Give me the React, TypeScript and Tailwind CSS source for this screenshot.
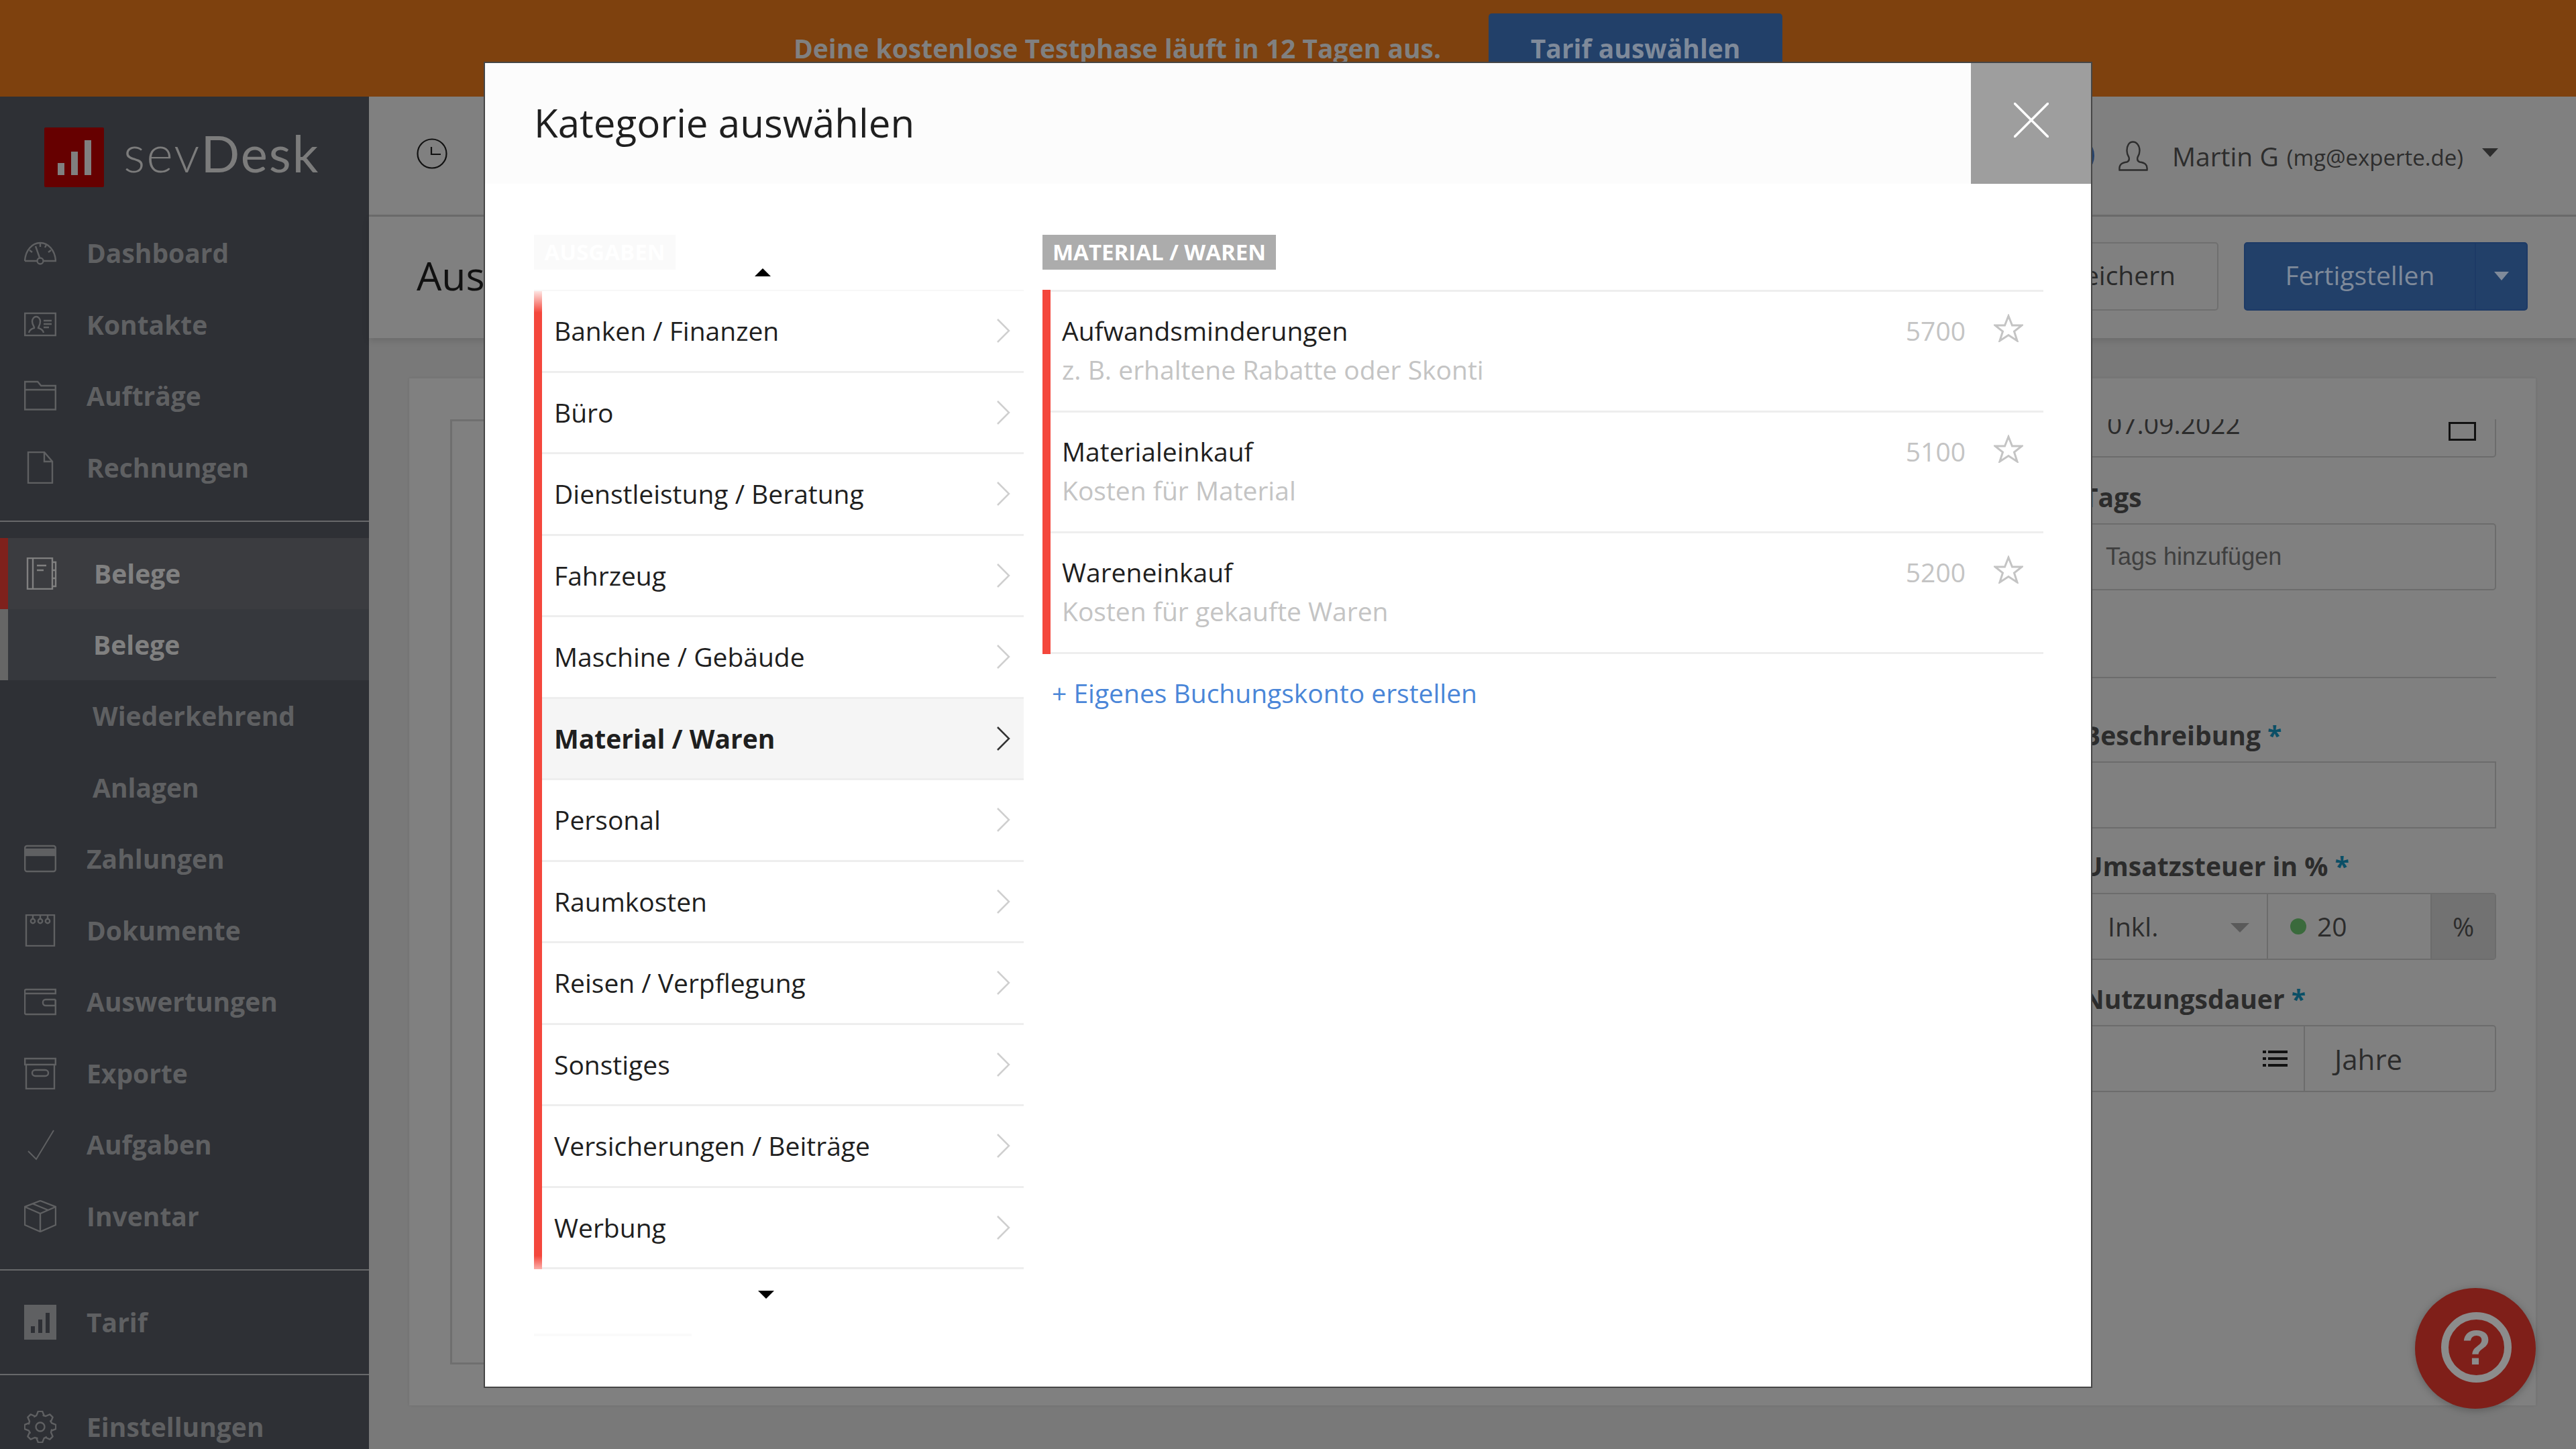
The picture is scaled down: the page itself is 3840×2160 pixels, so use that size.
const Svg = ({ children, className = "" }: { children: React.ReactNode; className?: string }) => (
  <svg viewBox="0 0 48 48" className={`w-[48px] h-[48px] shrink-0 ${className}`} fill="none" stroke="currentColor" strokeWidth="2.4">
    {children}
  </svg>
);

const gearPoints = () => {
  const pts: string[] = [];
  for (let i = 0; i < 8; i++) {
    const a = (i * Math.PI) / 4 - Math.PI / 2;
    const step = Math.PI / 24;
    const list: [number, number][] = [
      [17.5, a - 4 * step],
      [18, a - 2.4 * step],
      [23.5, a - 1 * step],
      [23.5, a + 1 * step],
      [18, a + 2.4 * step],
    ];
    list.forEach(([r, t]) => pts.push(`${(24 + r * Math.cos(t)).toFixed(1)},${(24 + r * Math.sin(t)).toFixed(1)}`));
  }
  return pts.join(" ");
};

const icons: Record<string, React.ReactNode> = {
  Dashboard: (
    <Svg>
      <path d="M1 36C2 20 12 9 24 9s22 11 23 27H29M19 36H1" />
      <path d="M17 14l6 17M8 20l4 3M40 20l-4 3M24 9v6M33 12l-2 4" />
      <circle cx="24" cy="36" r="4.5" />
    </Svg>
  ),
  Kontakte: (
    <Svg>
      <rect x="1.2" y="7" width="45.6" height="33" />
      <path d="M7 36c1-5 5-6 8-7 1-2-3-4-3-10 0-4 3-7 6-7s6 3 6 7c0 6-3 8-3 10 3 1 7 2 8 7" />
      <path d="M29 18h12M29 23h12M29 28h8" />
    </Svg>
  ),
  Aufträge: (
    <Svg>
      <path d="M1.2 44.5V3h19l5 6h21.6v35.5zM1.2 15h45.6" />
    </Svg>
  ),
  Rechnungen: (
    <Svg>
      <path d="M6 47V1h24l12 14v32zM30 1v14h12" />
    </Svg>
  ),
  Belege: (
    <Svg>
      <path d="M3 1h37v46H3zM11 1v46M40 7h5v12h-5M40 19h5v12h-5M40 31h5v12h-5" />
      <path d="M17 12h14M17 19h10" />
    </Svg>
  ),
  Zahlungen: (
    <Svg>
      <rect x="1.2" y="5" width="45.6" height="38" rx="3" />
      <rect x="1.2" y="10" width="45.6" height="9" fill="currentColor" />
    </Svg>
  ),
  Dokumente: (
    <Svg>
      <rect x="3" y="1" width="42" height="46" />
      <path d="M13 1v6M24 1v6M35 1v6" />
      <circle cx="13" cy="10" r="3.2" />
      <circle cx="24" cy="10" r="3.2" />
      <circle cx="35" cy="10" r="3.2" />
    </Svg>
  ),
  Auswertungen: (
    <Svg>
      <path d="M46.8 21V43H3a2 2 0 0 1-2-2V8a2 2 0 0 1 2-2h43.8v6H1.2" />
      <path d="M46.8 21H32a4 4 0 0 0-4 4v1a4 4 0 0 0 4 4h14.8v-9" />
    </Svg>
  ),
  Exporte: (
    <Svg>
      <path d="M1.2 2h45.6v9H1.2zM3 11h42v36H3z" />
      <rect x="12" y="19" width="24" height="9" rx="4.5" />
    </Svg>
  ),
  Aufgaben: (
    <Svg>
      <path d="M6 34l12 12L44 3" strokeWidth="2" />
    </Svg>
  ),
  Inventar: (
    <Svg>
      <path d="M24 1l23 9v27L24 47 1 37V10zM1 10l23 10 23-10M24 20v27M13 5.500l23 9.500" />
    </Svg>
  ),
  Einstellungen: (
    <Svg>
      <polygon points={gearPoints()} strokeLinejoin="round" />
      <circle cx="24" cy="24" r="6.500" />
    </Svg>
  ),
};

const TarifIcon = ({ bg, bar }: { bg: string; bar: string }) => (
  <svg viewBox="0 0 48 52" className="w-[48px] h-[52px] shrink-0">
    <rect width="48" height="52" fill={bg} />
    <rect x="10" y="32" width="6" height="10" fill={bar} />
    <rect x="21" y="22" width="6" height="20" fill={bar} />
    <rect x="32" y="12" width="6" height="30" fill={bar} />
  </svg>
);

const NavItem = ({ label, icon }: { label: string; icon: React.ReactNode }) => (
  <div className="flex items-center shrink-0 h-[106.5px] pl-[36px] gap-[45px] text-[#5f6062] text-[39px] font-bold">
    {icon}
    <span>{label}</span>
  </div>
);

const Sidebar = () => (
  <aside className="w-[550px] shrink-0 bg-[#2e3035] flex flex-col">
    <div className="h-[180px] shrink-0 flex items-start pl-[66px] pt-[46px] gap-[29px]">
      <svg viewBox="0 0 89 89" className="w-[89px] h-[89px] shrink-0">
        <rect width="89" height="89" rx="2" fill="#660000" />
        <rect x="20" y="53" width="10" height="18" fill="#808080" />
        <rect x="40" y="36" width="10" height="35" fill="#808080" />
        <rect x="60" y="19" width="10" height="52" fill="#808080" />
      </svg>
      <span className="font-['Lato',sans-serif] font-light text-[76px] leading-[80px] text-[#7c7c7c] tracking-[2px] mt-[-2px]">
        sev<span className="font-normal">Desk</span>
      </span>
    </div>
    {["Dashboard", "Kontakte", "Aufträge", "Rechnungen"].map((l) => (
      <NavItem key={l} label={l} icon={icons[l]} />
    ))}
    <div className="mt-[26px] mb-[24px] h-[2px] shrink-0 bg-[#67686a]" />
    <div className="flex items-center shrink-0 h-[106px] bg-[#3b3c40] border-l-[12px] border-[#7f211c] pl-[26px] gap-[54px] text-[#808080] text-[39px] font-bold">
      {icons.Belege}
      <span>Belege</span>
    </div>
    <div className="flex items-center shrink-0 h-[106px] bg-[#36383d] border-l-[12px] border-[#666666] pl-[127px] text-[#808080] text-[39px] font-bold">
      Belege
    </div>
    <div className="flex items-center shrink-0 h-[107px] pl-[138px] text-[#5f6062] text-[39px] font-bold">Wiederkehrend</div>
    <div className="flex items-center shrink-0 h-[106px] pl-[138px] text-[#5f6062] text-[39px] font-bold">Anlagen</div>
    {["Zahlungen", "Dokumente", "Auswertungen", "Exporte", "Aufgaben", "Inventar"].map((l) => (
      <NavItem key={l} label={l} icon={icons[l]} />
    ))}
    <div className="mt-[26px] mb-[24px] h-[2px] shrink-0 bg-[#67686a]" />
    <NavItem label="Tarif" icon={<TarifIcon bg="#5f6062" bar="#2e3035" />} />
    <div className="mt-[23px] mb-[24px] h-[2px] shrink-0 bg-[#67686a]" />
    <NavItem label="Einstellungen" icon={icons.Einstellungen} />
  </aside>
);

const TopBars = () => (
  <>
    <div className="h-[179px] shrink-0 bg-[#808080] border-b-[3px] border-[#6c6c6c] flex items-center pl-[71px] pr-[116px]">
      <svg viewBox="0 0 46 46" className="w-[46px] h-[46px] text-[#111111] mt-[-6px]" fill="none" stroke="currentColor" strokeWidth="2.200">
        <circle cx="23" cy="23" r="21.500" />
        <path d="M22 13v11h14" />
      </svg>
      <div className="ml-auto mr-[36px] w-[60px] h-[60px] rounded-full border-[3px] border-[#24416b]" />
      <svg viewBox="0 0 44 46" className="w-[44px] h-[46px] text-[#2d2d2d]" fill="none" stroke="currentColor" strokeWidth="2.400">
        <path d="M1.500 44.500h41c1-8-3-11-11-12-3-1-4-3-3-7 2-3 3-6 3-10 0-7-4-13-10-13s-9 6-9 13c0 4 1 7 3 10 1 4 0 6-3 7-8 1-12 4-11 12z" />
      </svg>
      <span className="ml-[36px] text-[39px] text-[#2d2d2d] mt-[3px]">Martin G</span>
      <span className="ml-[12px] text-[33px] text-[#2d2d2d] mt-[6px]">(mg@experte.de)</span>
      <span className="ml-[28px] w-0 h-0 border-x-[12px] border-t-[13px] border-x-transparent border-t-[#2d2d2d] mt-[-10px]" />
    </div>
    <div className="h-[181px] shrink-0 bg-[#808080] shadow-[0_4px_10px_rgba(0,0,0,0.12)] flex items-center pl-[71px] pr-[72px]">
      <span className="text-[59px] text-[#111111] mt-[-6px]">Ausgabe</span>
      <div className="ml-auto flex gap-[38px] mt-[-4px]">
        <div className="h-[102px] w-[320px] rounded-[5px] border-[2px] border-[#6f6f6f] flex items-center justify-end pr-[62px] pb-[2px] text-[39px] text-[#2a2a2a]">
          Speichern
        </div>
        <div className="h-[102px] w-[423px] rounded-[5px] border-[2px] border-[#1d3a66] bg-[#224069] flex text-[39px] text-[#7f8a9a]">
          <span className="w-[344px] flex items-center justify-center pb-[2px] border-r-[2px] border-[#1d3a66]">Fertigstellen</span>
          <span className="flex-1 flex items-center justify-center">
            <span className="w-0 h-0 border-x-[11px] border-t-[13px] border-x-transparent border-t-[#7f8a9a]" />
          </span>
        </div>
      </div>
    </div>
  </>
);

const Label = ({ text, star = true }: { text: string; star?: boolean }) => (
  <div className="text-[39px] leading-[52px] font-bold text-[#2c2c2c]">
    {text} {star && <span className="text-[#0b4f66]">*</span>}
  </div>
);

const FormColumn = () => (
  <div className="w-[616px] shrink-0 h-[1409px] overflow-hidden flex flex-col">
    <div className="mt-[-43px] h-[100px] shrink-0 rounded-[5px] border-[2px] border-[#6c6c6c] flex items-center pl-[34px] pr-[28px] text-[39px] text-[#2c2c2c]">
      <span>07.09.2022</span>
      <span className="ml-auto w-[41px] h-[28px] border-[3px] border-[#111111] mt-[22px]" />
    </div>
    <div className="mt-[33px]">
      <Label text="Tags" star={false} />
    </div>
    <div className="mt-[13px] h-[100px] shrink-0 rounded-[5px] border-[2px] border-[#6c6c6c] flex items-center pl-[32px] font-['Liberation_Sans',sans-serif] text-[36px] text-[#3f3f3f]">
      Tags hinzufügen
    </div>
    <div className="mt-[129px] h-[2px] bg-[#6c6c6c] shrink-0" />
    <div className="mt-[59px]">
      <Label text="Beschreibung" />
    </div>
    <div className="mt-[13px] h-[100px] shrink-0 border-[2px] border-[#6c6c6c]" />
    <div className="mt-[30px]">
      <Label text="Umsatzsteuer in %" />
    </div>
    <div className="mt-[14px] h-[100px] shrink-0 rounded-[5px] border-[2px] border-[#6c6c6c] flex text-[39px] text-[#2c2c2c]">
      <div className="w-[274px] flex items-center pl-[35px] border-r-[2px] border-[#6c6c6c]">
        <span>Inkl.</span>
        <span className="ml-[108px] w-0 h-0 border-x-[14px] border-t-[14px] border-x-transparent border-t-[#5a5a5a] mt-[4px]" />
      </div>
      <div className="w-[244px] flex items-center pl-[33px] gap-[16px] border-r-[2px] border-[#6c6c6c]">
        <span className="w-[24px] h-[24px] rounded-full bg-[#3a6a3c]" />
        <span>20</span>
      </div>
      <div className="flex-1 flex items-center justify-center bg-[#727272]">%</div>
    </div>
    <div className="mt-[32px]">
      <Label text="Nutzungsdauer" />
    </div>
    <div className="mt-[13px] h-[100px] shrink-0 rounded-[5px] border-[2px] border-[#6c6c6c] flex text-[39px] text-[#2c2c2c]">
      <div className="w-[329px] flex items-center justify-end pr-[24px] border-r-[2px] border-[#6c6c6c]">
        <svg viewBox="0 0 37 26" className="w-[37px] h-[26px]" fill="#111111">
          <rect x="0" y="1" width="5" height="4" />
          <rect x="8" y="1" width="29" height="4" />
          <rect x="0" y="11" width="5" height="4" />
          <rect x="8" y="11" width="29" height="4" />
          <rect x="0" y="21" width="5" height="4" />
          <rect x="8" y="21" width="29" height="4" />
        </svg>
      </div>
      <div className="flex-1 flex items-center pl-[44px] text-[42px]">Jahre</div>
    </div>
  </div>
);

const categories = [
  "Banken / Finanzen",
  "Büro",
  "Dienstleistung / Beratung",
  "Fahrzeug",
  "Maschine / Gebäude",
  "Material / Waren",
  "Personal",
  "Raumkosten",
  "Reisen / Verpflegung",
  "Sonstiges",
  "Versicherungen / Beiträge",
  "Werbung",
];

const accounts = [
  { name: "Aufwandsminderungen", hint: "z. B. erhaltene Rabatte oder Skonti", nr: "5700" },
  { name: "Materialeinkauf", hint: "Kosten für Material", nr: "5100" },
  { name: "Wareneinkauf", hint: "Kosten für gekaufte Waren", nr: "5200" },
];

const Chevron = ({ active }: { active: boolean }) => (
  <svg viewBox="0 0 20 36" className={`w-[20px] h-[36px] ${active ? "text-[#333333]" : "text-[#cfcfcf]"}`} fill="none" stroke="currentColor" strokeWidth="2.500">
    <path d="M1 1l17 17L1 35" />
  </svg>
);

const Star = () => (
  <svg viewBox="0 0 44 42" className="w-[44px] h-[42px] text-[#c4c4c4]" fill="none" stroke="currentColor" strokeWidth="3">
    <path d="M22 3l5.500 14H42l-11.500 9 4.500 14-13-8.500L9 40l4.500-14L2 17h14.500z" />
  </svg>
);

const CategoryModal = () => (
  <div className="absolute left-[721px] top-[92px] w-[2398px] h-[1977px] bg-white border-[2px] border-[#464646] flex flex-col">
    <div className="h-[180px] shrink-0 bg-[#fcfcfc] flex items-center justify-between pl-[73px]">
      <h1 className="text-[58.300px] text-[#1f1f1f] mt-[-2px]">Kategorie auswählen</h1>
      <div className="w-[179px] h-[180px] bg-[#9e9e9e] flex items-center justify-center">
        <svg viewBox="0 0 52 52" className="w-[52px] h-[52px] text-white mt-[-10px]" fill="none" stroke="currentColor" strokeWidth="3.500" strokeLinecap="round">
          <path d="M1.500 1.500l49 49M50.500 1.500l-49 49" />
        </svg>
      </div>
    </div>
    <div className="flex pl-[73px] pt-[76px] gap-[28px]">
      <div className="w-[730px] flex flex-col">
        <div className="flex items-start h-[52px]">
          <span className="h-[52px] w-[211px] bg-[#fafafa] text-white text-[33px] font-bold flex items-center justify-center">AUSGABEN</span>
          <span className="ml-[118px] mt-[50px] w-0 h-0 border-x-[12px] border-b-[12px] border-x-transparent border-b-black" />
        </div>
        <div className="mt-[30px] flex border-t-[2px] border-[#f7f7f7]">
          <div className="w-[12px] shrink-0 bg-[linear-gradient(to_bottom,#fde4e2_0,#f4473c_32px,#f4473c_calc(100%-20px),#fbb0ab_100%)]" />
          <div className="flex-1 flex flex-col">
            {categories.map((c) => {
              const active = c === "Material / Waren";
              return (
                <div
                  key={c}
                  className={`h-[121.5px] shrink-0 border-b-[3px] border-[#eeeeee] flex items-center justify-between pl-[18px] pr-[20px] text-[39px] text-[#1f1f1f] ${active ? "bg-[#f5f5f5] font-bold" : ""}`}
                >
                  <span>{c}</span>
                  <Chevron active={active} />
                </div>
              );
            })}
          </div>
        </div>
        <span className="mt-[32px] ml-[334px] w-0 h-0 border-x-[12px] border-t-[12px] border-x-transparent border-t-black" />
        <div className="mt-[52px] w-[235px] h-[4px] bg-[#fafafa]" />
      </div>
      <div className="w-[1492px] flex flex-col">
        <span className="h-[52px] w-fit bg-[#acacac] text-white text-[33px] font-bold flex items-center px-[15px]">MATERIAL / WAREN</span>
        <div className="mt-[30px] flex">
          <div className="w-[12px] shrink-0 bg-[#f4473c]" />
          <div className="flex-1 flex flex-col border-t-[3px] border-[#eeeeee]">
            {accounts.map((a) => (
              <div key={a.nr} className="h-[180px] shrink-0 border-b-[3px] border-[#eeeeee] flex items-start pl-[17px] pr-[30px] pt-[29px] text-[39px] leading-[57px]">
                <div className="flex-1">
                  <div className="text-[#1f1f1f]">{a.name}</div>
                  <div className="text-[#c4c4c4] mt-[1px]">{a.hint}</div>
                </div>
                <span className="text-[#c4c4c4] font-normal">{a.nr}</span>
                <span className="ml-[42px] mt-[4px]">
                  <Star />
                </span>
              </div>
            ))}
          </div>
        </div>
        <a className="mt-[29px] pl-[14px] text-[39px] leading-[57px] text-[#4a86d8]">+ Eigenes Buchungskonto erstellen</a>
      </div>
    </div>
  </div>
);

export default function App() {
  return (
    <div className="relative w-[3840px] h-[2160px] overflow-hidden bg-[#797979] font-['Open_Sans',sans-serif] flex flex-col">
      <div className="h-[144px] shrink-0 bg-[#7e410e] flex items-start justify-center gap-[71px]">
        <span className="text-[39px] font-bold text-[#808080] mt-[43px]">Deine kostenlose Testphase läuft in 12 Tagen aus.</span>
        <span className="mt-[20px] w-[438px] h-[100px] rounded-[5px] bg-[#224069] text-[39px] font-bold text-[#7f8a9a] flex justify-center pt-[23px]">Tarif auswählen</span>
      </div>
      <div className="flex flex-1 min-h-0">
        <Sidebar />
        <main className="flex-1 flex flex-col min-w-0">
          <TopBars />
          <div className="mx-[60px] mt-[60px] h-[1531px] shrink-0 bg-[#808080] shadow-[0_0_4px_rgba(0,0,0,0.1)] flex pl-[61px] pr-[59px] pt-[61px] gap-[62px]">
            <div className="flex-1 h-[1409px] border-[3px] border-[#6f6f6f]" />
            <FormColumn />
          </div>
        </main>
      </div>
      <CategoryModal />
      <div className="absolute left-[3600px] top-[1920px] w-[180px] h-[180px] rounded-full bg-[#7f1f19] shadow-[0_2px_12px_rgba(0,0,0,0.25)] flex items-center justify-center">
        <div className="ml-[3px] mt-[-3px] w-[105px] h-[105px] rounded-full border-[11px] border-[#8c8c8c] flex items-center justify-center text-[#8c8c8c] text-[72px] font-bold font-['Liberation_Sans',sans-serif]">
          ?
        </div>
      </div>
    </div>
  );
}
